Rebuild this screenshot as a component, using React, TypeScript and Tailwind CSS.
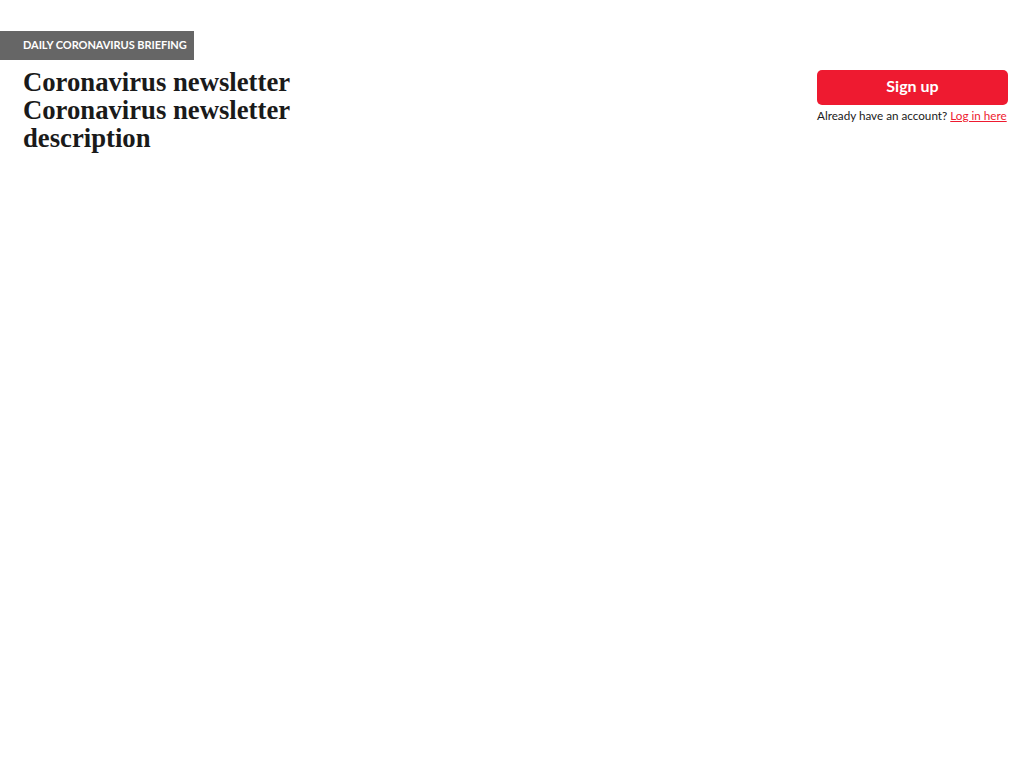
export default function App() {
  return (
    <div className="min-h-screen bg-white pt-[31px]">
      <div className="flex items-start justify-between">
        <div className="flex flex-col">
          <div className="flex h-[29px] w-[194px] items-center bg-[#666666] pl-[23px]">
            <span className="font-['Lato',sans-serif] text-[11px] font-bold uppercase tracking-[-0.05px] text-white">
              Daily Coronavirus Briefing
            </span>
          </div>
          <h1 className="mt-[8px] w-[320px] pl-[23px] font-['Liberation_Serif',serif] text-[26.7px] font-bold leading-[28px] text-[#1a1a1a]">
            Coronavirus newsletter
            <br />
            Coronavirus newsletter
            <br />
            description
          </h1>
        </div>
        <div className="mr-[16px] mt-[39px] flex w-[191px] flex-col">
          <button className="h-[35px] w-full rounded-[5px] bg-[#ee1a30] pb-[3px] font-['Lato',sans-serif] text-[16px] font-bold text-white">
            Sign up
          </button>
          <p className="mt-[2px] whitespace-nowrap font-['Lato',sans-serif] text-[11.7px] text-[#1a1a1a]">
            Already have an account?{' '}
            <a href="#" className="text-[#ee1a30] underline">
              Log in here
            </a>
          </p>
        </div>
      </div>
    </div>
  )
}
